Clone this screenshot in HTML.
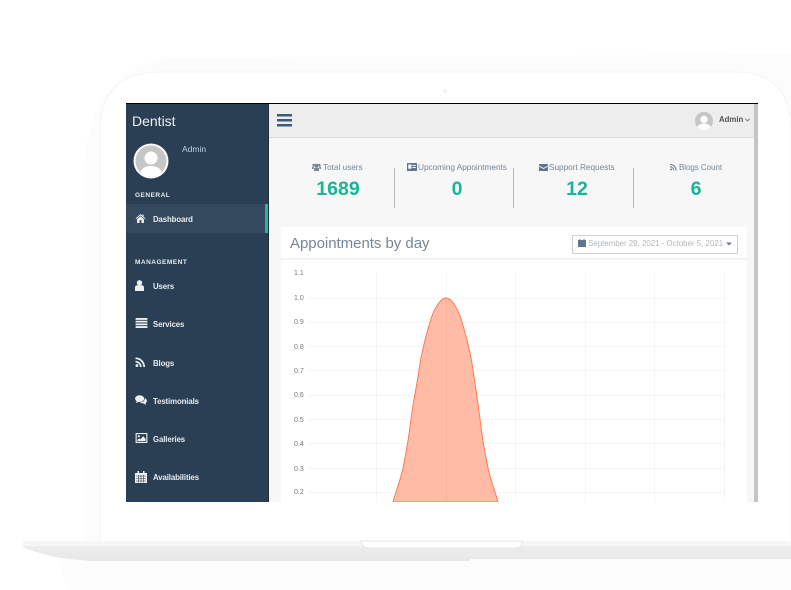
<!DOCTYPE html>
<html><head><meta charset="utf-8">
<style>
html,body{margin:0;padding:0;background:#fff}
#p{position:relative;width:791px;height:590px;overflow:hidden;background:#fff;font-family:"Liberation Sans",sans-serif}
#p div,#p span,#p svg{position:absolute}
#s{left:0;top:0;width:791px;height:590px;filter:blur(.35px)}
.t{white-space:nowrap;line-height:1}
.nav{left:153px;font-size:7.800px;font-weight:700;color:#e7ebef;letter-spacing:-.1px}
.sec{left:135px;font-size:6.500px;font-weight:700;color:#e7ebef;letter-spacing:.5px}
.lab{font-size:8.300px;color:#73879c;text-align:center;letter-spacing:-.05px}
.num{font-size:19.500px;font-weight:700;color:#17b696;text-align:center;width:100px}
.sep{width:1px;top:168px;height:40px;background:#b9b9b9}
.yl{left:294px;font-size:7px;color:#73777c}
</style></head><body>
<div id="p">
<svg style="left:0;top:0" width="791" height="590" viewBox="0 0 791 590">
<defs><linearGradient id="b" x1="0" y1="0" x2="0" y2="1"><stop offset="0" stop-color="#f4f4f4"/><stop offset=".3" stop-color="#ececec"/><stop offset="1" stop-color="#e8e8e8"/></linearGradient></defs>
<path d="M84 170Q88 72 170 58L791 54V545H84Z" fill="#fcfcfc"/>
<path d="M100 130Q101 72 160 72H735Q791 72 791 130V545H100Z" fill="#fff" stroke="#f4f4f4"/>
<path d="M60 556H791V590H70Q60 575 60 556Z" fill="#fcfcfc"/>
<circle cx="445" cy="91" r="2" fill="#f2f2f2"/>
<path d="M23 542V547Q35 553 60 558L90 561H470V559H791V542Z" fill="url(#b)"/>
<rect x="23" y="541" width="768" height="5" fill="#f6f6f6"/>
<path d="M361 541H522V544Q521 548 515 548H370Q363 548 362 544Z" fill="#fff" stroke="#e6e6e6" stroke-width="1"/>
</svg>

<div id="s">
<div style="left:126px;top:103px;width:632px;height:1px;background:#000"></div>
<div style="left:126px;top:104px;width:142px;height:398px;background:#2a3f54"></div>
<div style="left:268px;top:104px;width:1px;height:398px;background:#1e2c3b"></div>
<div style="left:269px;top:104px;width:485px;height:398px;background:#f7f7f7"></div>
<div style="left:269px;top:104px;width:485px;height:33px;background:#ededed;border-bottom:1px solid #dadada"></div>
<div style="left:754px;top:104px;width:4px;height:398px;background:#c4c4c4"></div>

<div class="t" style="left:132px;top:114px;font-size:14px;color:#ecf0f1">Dentist</div>
<svg style="left:133px;top:143px" width="36" height="36" viewBox="0 0 36 36"><defs><clipPath id="c1"><circle cx="18" cy="18" r="15.500"/></clipPath></defs><circle cx="18" cy="18" r="17.500" fill="#fff"/><circle cx="18" cy="18" r="15.500" fill="#c6c6c6"/><g clip-path="url(#c1)"><circle cx="18" cy="15" r="6.500" fill="#fff"/><path d="M6 36Q6 23 18 23Q30 23 30 36Z" fill="#fff"/></g></svg>
<div class="t" style="left:182px;top:145px;font-size:8.500px;color:#bcd2e4">Admin</div>
<div class="t sec" style="top:193px">GENERAL</div>
<div style="left:126px;top:204px;width:139px;height:29px;background:#35495e"></div>
<div style="left:265px;top:204px;width:3px;height:29px;background:#1abb9c"></div>
<svg style="left:135px;top:214px" width="11" height="9" viewBox="0 0 12 11"><path d="M6 0L0 5.300L.7 6.100L6 1.700L11.300 6.100L12 5.300L9.800 3.400V.8H8.300V2.100ZM1.800 6.300V11H4.800V7.500H7.200V11H10.200V6.300L6 2.800Z" fill="#ecf0f1"/></svg>
<div class="t nav" style="top:216px">Dashboard</div>
<div class="t sec" style="top:260px">MANAGEMENT</div>

<svg style="left:135px;top:280px" width="9" height="11" viewBox="0 0 9 11"><circle cx="4.500" cy="2.800" r="2.700" fill="#ecf0f1"/><path d="M0 11V7.500Q0 5.300 2.200 5.200H6.800Q9 5.300 9 7.500V11Z" fill="#ecf0f1"/></svg>
<div class="t nav" style="top:283px">Users</div>
<svg style="left:135px;top:318px" width="13" height="10" viewBox="0 0 13 11"><path d="M0 0H13V2H0ZM0 3H13V5H0ZM0 6H13V8H0ZM0 9H13V11H0Z" fill="#ecf0f1"/></svg>
<div class="t nav" style="top:321px">Services</div>
<svg style="left:135px;top:357px" width="11" height="10" viewBox="0 0 11 11"><circle cx="1.600" cy="9.400" r="1.600" fill="#ecf0f1"/><path d="M0 4.200A6.800 6.800 0 0 1 6.800 11H5A5 5 0 0 0 0 6ZM0 .5A10.500 10.500 0 0 1 10.500 11H8.600A8.600 8.600 0 0 0 0 2.400Z" fill="#ecf0f1"/></svg>
<div class="t nav" style="top:360px">Blogs</div>
<svg style="left:135px;top:395px" width="12" height="10" viewBox="0 0 13 11"><ellipse cx="5" cy="4" rx="5" ry="3.700" fill="#ecf0f1"/><path d="M2 6L1 9L5 7Z" fill="#ecf0f1"/><path d="M10.800 3.500Q13 4.800 13 6.500Q13 8 11.500 8.800L12.200 10.800L9 9.200Q6.500 9.200 5 8.200Q10.500 8.200 10.800 3.500Z" fill="#ecf0f1"/></svg>
<div class="t nav" style="top:398px">Testimonials</div>
<svg style="left:135px;top:433px" width="13" height="10" viewBox="0 0 13 11"><rect x=".6" y=".6" width="11.800" height="9.800" fill="none" stroke="#ecf0f1" stroke-width="1.200"/><circle cx="3.500" cy="3.500" r="1.200" fill="#ecf0f1"/><path d="M2 9V7.500L4 5.800L5.300 7L8.300 3.500L11 6.500V9Z" fill="#ecf0f1"/></svg>
<div class="t nav" style="top:436px">Galleries</div>
<svg style="left:135px;top:471px" width="12" height="12" viewBox="0 0 12 12"><path d="M0 2H2.500V0H4V2H8V0H9.500V2H12V12H0Z" fill="#ecf0f1"/><path d="M1 5H11M1 7.500H11M1 10H11M3.500 4V11.500M6 4V11.500M8.500 4V11.500" stroke="#2a3f54" stroke-width=".6" fill="none"/></svg>
<div class="t nav" style="top:474px">Availabilities</div>

<svg style="left:277px;top:114px" width="15" height="13" viewBox="0 0 15 13"><path d="M0 0H15V2.500H0ZM0 5H15V7.500H0ZM0 10H15V12.500H0Z" fill="#3a5a80"/></svg>
<svg style="left:695px;top:112px" width="18" height="18" viewBox="0 0 18 18"><defs><clipPath id="c2"><circle cx="9" cy="9" r="9"/></clipPath></defs><circle cx="9" cy="9" r="9" fill="#c6c6c6"/><g clip-path="url(#c2)"><circle cx="9" cy="7.500" r="3.700" fill="#fff"/><path d="M2 18Q2 11.500 9 11.500Q16 11.500 16 18Z" fill="#fff"/></g></svg>
<div class="t" style="left:719px;top:116px;font-size:7.800px;font-weight:700;color:#515356">Admin</div>
<svg style="left:745px;top:118px" width="5" height="4" viewBox="0 0 5 4"><path d="M.4 .8L2.500 2.900L4.600 .8" fill="none" stroke="#666" stroke-width=".8"/></svg>

<svg style="left:312px;top:163px" width="9" height="8" viewBox="0 0 9 8"><circle cx="4.500" cy="2.600" r="1.900" fill="#73879c"/><circle cx="1.700" cy="2" r="1.300" fill="#73879c"/><circle cx="7.300" cy="2" r="1.300" fill="#73879c"/><path d="M2 8V5.700Q2 4.600 3.300 4.600H5.700Q7 4.600 7 5.700V8ZM0 6V4.400Q0 3.500 1 3.500H2L1.500 6ZM9 6V4.400Q9 3.500 8 3.500H7L7.500 6Z" fill="#73879c"/></svg>
<div class="t lab" style="left:323px;top:163px">Total users</div>
<div class="t num" style="left:288px;top:180px">1689</div>
<div class="sep" style="left:394px"></div>
<svg style="left:407px;top:163px" width="10" height="8" viewBox="0 0 10 8"><path fill-rule="evenodd" d="M0 0H10V8H0ZM1.200 1.500V5.800H4.500V1.500ZM5.500 2V3H8.800V2ZM5.500 4V5H8.800V4Z" fill="#5f7690"/></svg>
<div class="t lab" style="left:418px;top:163px">Upcoming Appointments</div>
<div class="t num" style="left:407px;top:180px">0</div>
<div class="sep" style="left:513px"></div>
<svg style="left:539px;top:164px" width="9" height="7" viewBox="0 0 9 7"><path d="M0 0H9V1.500L4.500 4L0 1.500ZM0 2.500L4.500 5L9 2.500V7H0Z" fill="#5f7690"/></svg>
<div class="t lab" style="left:549px;top:163px">Support Requests</div>
<div class="t num" style="left:527px;top:180px">12</div>
<div class="sep" style="left:633px"></div>
<svg style="left:670px;top:163px" width="7" height="8" viewBox="0 0 11 11"><circle cx="1.600" cy="9.400" r="1.600" fill="#73879c"/><path d="M0 4.200A6.800 6.800 0 0 1 6.800 11H5A5 5 0 0 0 0 6ZM0 .5A10.500 10.500 0 0 1 10.500 11H8.600A8.600 8.600 0 0 0 0 2.400Z" fill="#73879c"/></svg>
<div class="t lab" style="left:679px;top:164px;font-size:8px">Blogs Count</div>
<div class="t num" style="left:646px;top:180px">6</div>

<div style="left:281px;top:227px;width:466px;height:275px;background:#fff"></div>
<div style="left:281px;top:258px;width:466px;height:2px;background:#f0f2f4"></div>
<div class="t" style="left:290px;top:236px;font-size:15px;letter-spacing:-.03px;color:#73879c">Appointments by day</div>
<div style="left:572px;top:235px;width:164px;height:17px;background:#fff;border:1px solid #d0d0d0"></div>
<svg style="left:578px;top:239px" width="8" height="8" viewBox="0 0 8 8"><path d="M0 1H1.500V0H2.500V1H5.500V0H6.500V1H8V8H0Z" fill="#5f7690"/></svg>
<div class="t" style="left:588px;top:240px;font-size:7.900px;color:#b1b5b9">September 29, 2021 - October 5, 2021</div>
<svg style="left:726px;top:242px" width="6" height="4" viewBox="0 0 6 4"><path d="M0 .5H6L3 3.500Z" fill="#6b7a88"/></svg>

<svg style="left:281px;top:262px" width="466" height="240" viewBox="281 262 466 240">
<g stroke="#f5f5f5" stroke-width="1" fill="none">
<path d="M307 298.500H726M307 322.500H726M307 346.500H726M307 370.500H726M307 395.500H726M307 419.500H726M307 443.500H726M307 468.500H726M307 492.500H726"/>
<path d="M376.500 273V502M446.500 273V502M515.500 273V502M585.500 273V502M654.500 273V502M724.500 273V502"/>
</g>
<path d="M393 502C396 491 400.500 480 403 468C405.500 456 409 436 411 419C413 402 417 385 419 370C421 355 426.500 334 430 322C433.500 310 440 298 446 298C452 298 458.500 310 462 322C465.500 334 471 355 473 370C475 385 478 402 480 419C482 436 485.500 456 488 468C490.500 480 495 491 498 502Z" fill="#ffbba6" stroke="#ff7a50" stroke-width="1"/>
<path d="M446.500 299V502" stroke="#f7b19c" stroke-width="1"/>
</svg>
<div class="t yl" style="top:270px">1.1</div>
<div class="t yl" style="top:295px">1.0</div>
<div class="t yl" style="top:319px">0.9</div>
<div class="t yl" style="top:344px">0.8</div>
<div class="t yl" style="top:368px">0.7</div>
<div class="t yl" style="top:392px">0.6</div>
<div class="t yl" style="top:417px">0.5</div>
<div class="t yl" style="top:441px">0.4</div>
<div class="t yl" style="top:466px">0.3</div>
<div class="t yl" style="top:489px">0.2</div>
</div>
</div>
</body></html>
